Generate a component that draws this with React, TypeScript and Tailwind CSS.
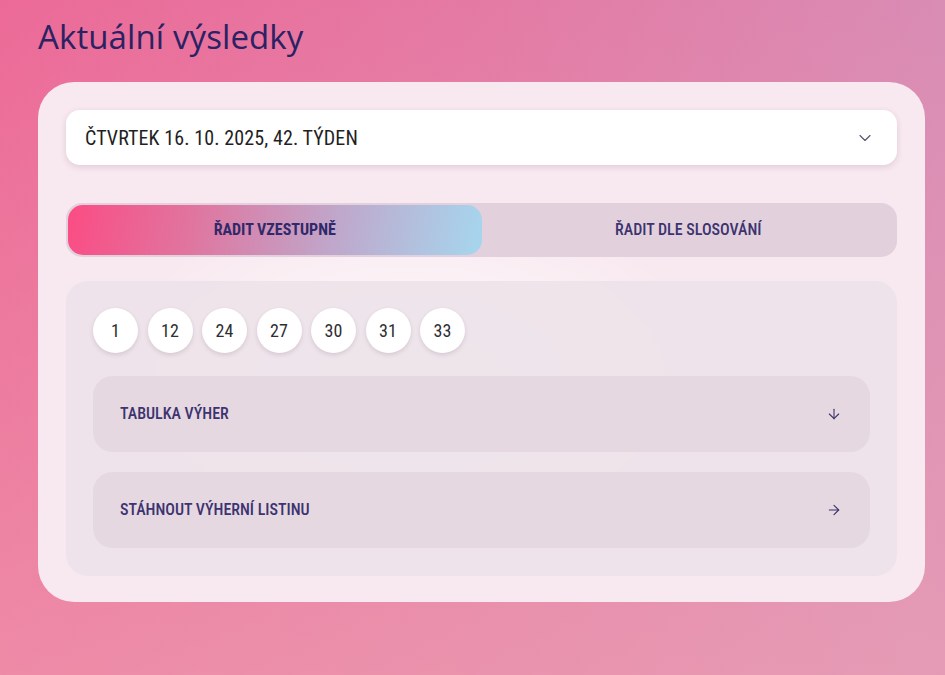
import { ChevronDown, ArrowDown, ArrowRight } from "lucide-react";

const NUMBERS = [1, 12, 24, 27, 30, 31, 33];

const cond = "font-['Roboto',sans-serif] [font-stretch:condensed]";

function LinkRow({ label, icon }: { label: string; icon: React.ReactNode }) {
  return (
    <button
      type="button"
      className="flex h-[76px] w-full items-center justify-between rounded-[20px] bg-[#e2d4df]/80 pl-[27px] pr-[28px] text-left"
    >
      <span className={`${cond} text-[16px] font-medium text-[#3d3370]`}>{label}</span>
      {icon}
    </button>
  );
}

export default function App() {
  return (
    <div className="min-h-[675px] w-full bg-[linear-gradient(180deg,rgba(240,170,182,0)_0%,rgba(240,170,182,0.5)_100%),linear-gradient(90deg,#ec6a97_0%,#e47aa4_50%,#d98cb4_100%)] pl-[38px] pr-[20px] pt-[15px] pb-[73px]">
      <h1 className="font-['Open_Sans',sans-serif] text-[33px] font-normal leading-[44px] tracking-[0.1px] text-[#2a2262]">
        Aktuální výsledky
      </h1>

      <div className="relative mt-[23px] overflow-hidden rounded-[36px] bg-[#f8e8ef] p-[28px] pb-[26px]">
        {/* soft glow behind the draw panel */}
        <div className="pointer-events-none absolute inset-0 bg-[radial-gradient(ellipse_at_42%_58%,rgba(255,255,255,0.9)_0%,rgba(255,255,255,0)_45%)]" />

        <div className="relative">
          <button
            type="button"
            className="flex h-[55px] w-full items-center justify-between rounded-[14px] bg-white pl-[19px] pr-[22px] shadow-[0_2px_6px_rgba(120,80,110,0.18)]"
          >
            <span className={`${cond} text-[20px] font-normal tracking-[0.1px] text-[#1f1f24]`}>
              ČTVRTEK 16. 10. 2025, 42. TÝDEN
            </span>
            <ChevronDown className="h-5 w-5 text-[#5b5570]" strokeWidth={1.4} />
          </button>

          <div className="mt-[38px] flex h-[54px] rounded-[16px] bg-[#e2d1dc] p-[2px]">
            <button
              type="button"
              className="flex flex-1 items-center justify-center rounded-[15px] bg-[linear-gradient(100deg,#fb4c84_0%,#e0759f_30%,#bfa8cc_65%,#a6d6ee_100%)]"
            >
              <span className={`${cond} text-[16px] font-bold text-[#30296a]`}>ŘADIT VZESTUPNĚ</span>
            </button>
            <button type="button" className="flex flex-1 items-center justify-center">
              <span className={`${cond} text-[16px] font-medium text-[#3d3370]`}>ŘADIT DLE SLOSOVÁNÍ</span>
            </button>
          </div>

          <div className="mt-[24px] rounded-[22px] bg-[#ece2e9]/90 px-[27px] pt-[27px] pb-[28px]">
            <div className="flex gap-[9.5px]">
              {NUMBERS.map((n) => (
                <div
                  key={n}
                  className="flex h-[45px] w-[45px] items-center justify-center rounded-full bg-white shadow-[0_2px_4px_rgba(120,90,110,0.2)]"
                >
                  <span className={`${cond} text-[18px] text-[#2e2e33]`}>{n}</span>
                </div>
              ))}
            </div>

            <div className="mt-[23px] flex flex-col gap-[20px]">
              <LinkRow
                label="TABULKA VÝHER"
                icon={<ArrowDown className="h-4 w-4 text-[#3a2f69]" strokeWidth={1.6} />}
              />
              <LinkRow
                label="STÁHNOUT VÝHERNÍ LISTINU"
                icon={<ArrowRight className="h-4 w-4 text-[#3a2f69]" strokeWidth={1.6} />}
              />
            </div>
          </div>
        </div>
      </div>
    </div>
  );
}
